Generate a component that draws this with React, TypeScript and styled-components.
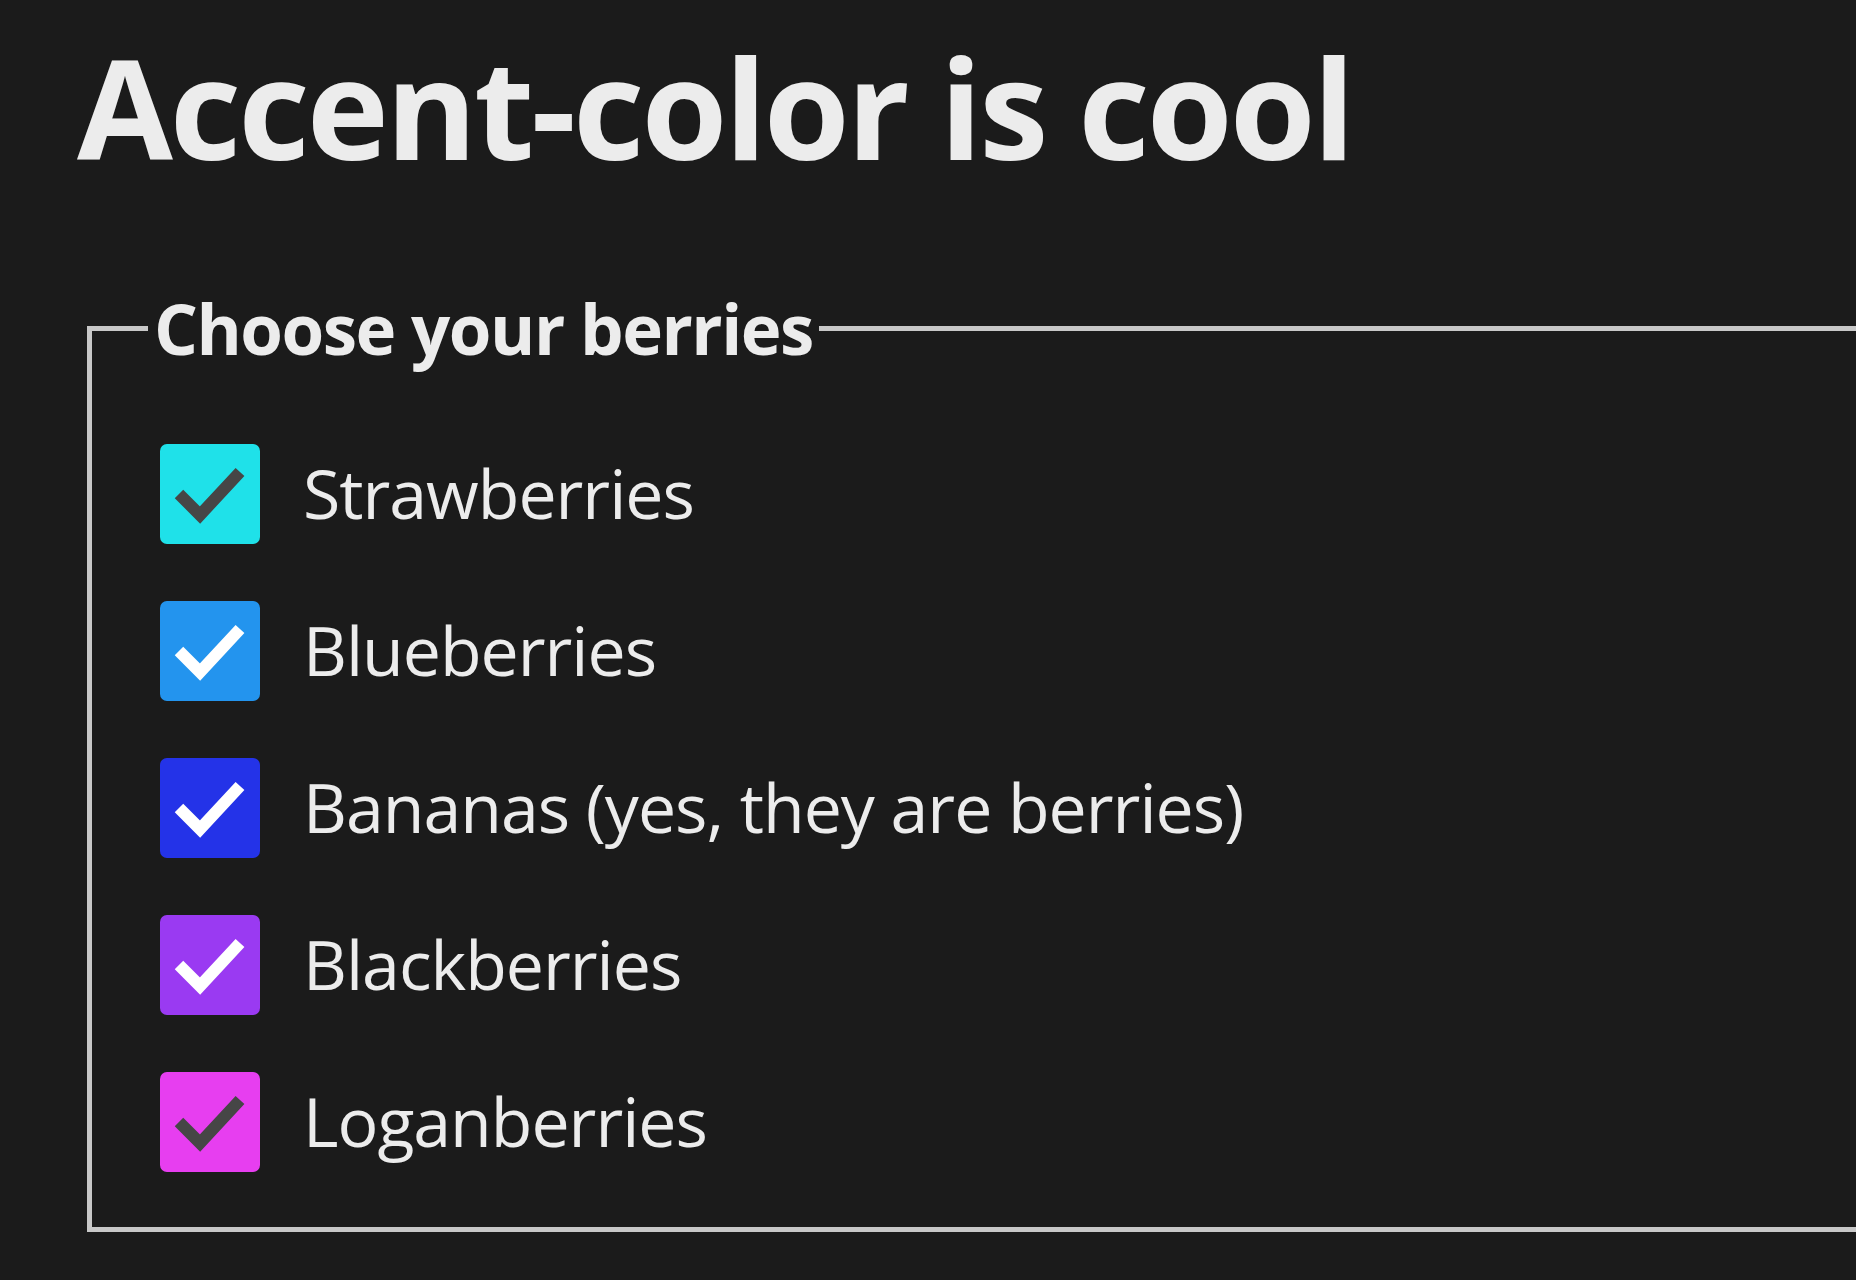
import React from 'react'
import styled, { createGlobalStyle } from 'styled-components'

const GlobalStyle = createGlobalStyle`
  html, body {
    margin: 0;
    padding: 0;
    background: #1b1b1b;
    overflow: hidden;
  }
`

const Page = styled.main`
  min-height: 100vh;
  box-sizing: border-box;
  padding: 11px 0 0 77px;
  overflow: hidden;
  font-family: 'Open Sans', 'Noto Sans', sans-serif;
  color: #ececec;
`

const Title = styled.h1`
  margin: 0 0 80px;
  font-size: 139px;
  font-weight: 700;
  letter-spacing: -0.022em;
  line-height: normal;
  white-space: nowrap;
`

const Group = styled.fieldset`
  margin: 0 0 0 10px;
  width: calc(100% + 60px);
  box-sizing: border-box;
  border: 5px solid #c8c8c8;
  padding: 69px 0 55px 56px;
  min-width: 0;
`

const Legend = styled.legend`
  padding: 0 6px;
  font-size: 69px;
  font-weight: 700;
  letter-spacing: -0.022em;
  line-height: normal;
  color: #ececec;
`

const List = styled.div`
  display: flex;
  flex-direction: column;
  gap: 57px;
  padding-left: 12px;
`

const Row = styled.label`
  display: flex;
  align-items: center;
  gap: 43px;
  height: 100px;
  font-size: 68px;
  letter-spacing: -1px;
  line-height: 1;
  cursor: pointer;
`

const HiddenInput = styled.input`
  position: absolute;
  opacity: 0;
  width: 0;
  height: 0;
  margin: 0;
`

const Box = styled.span<{ $bg: string }>`
  flex: none;
  width: 100px;
  height: 100px;
  border-radius: 7px;
  background: ${p => p.$bg};
  display: flex;
  align-items: center;
  justify-content: center;
`

const LabelText = styled.span`
  position: relative;
  top: -1px;
`

const Check = ({ color }: { color: string }) => (
  <svg width="100" height="100" viewBox="0 0 100 100" aria-hidden="true">
    <path
      d="M19 50 L40 71 L80 28"
      fill="none"
      stroke={color}
      strokeWidth="12"
      strokeLinecap="butt"
      strokeLinejoin="miter"
    />
  </svg>
)

const berries = [
  { name: 'Strawberries', bg: '#1fe1e9', mark: '#464646' },
  { name: 'Blueberries', bg: '#2394ee', mark: '#ffffff' },
  { name: 'Bananas (yes, they are berries)', bg: '#2433e8', mark: '#ffffff' },
  { name: 'Blackberries', bg: '#9a3af2', mark: '#ffffff' },
  { name: 'Loganberries', bg: '#e73ef0', mark: '#464646' },
]

export default function App() {
  return (
    <>
      <GlobalStyle />
      <Page>
        <Title>Accent-color is cool</Title>
        <Group>
          <Legend>Choose your berries</Legend>
          <List>
            {berries.map(b => (
              <Row key={b.name}>
                <HiddenInput type="checkbox" defaultChecked />
                <Box $bg={b.bg}>
                  <Check color={b.mark} />
                </Box>
                <LabelText>{b.name}</LabelText>
              </Row>
            ))}
          </List>
        </Group>
      </Page>
    </>
  )
}
